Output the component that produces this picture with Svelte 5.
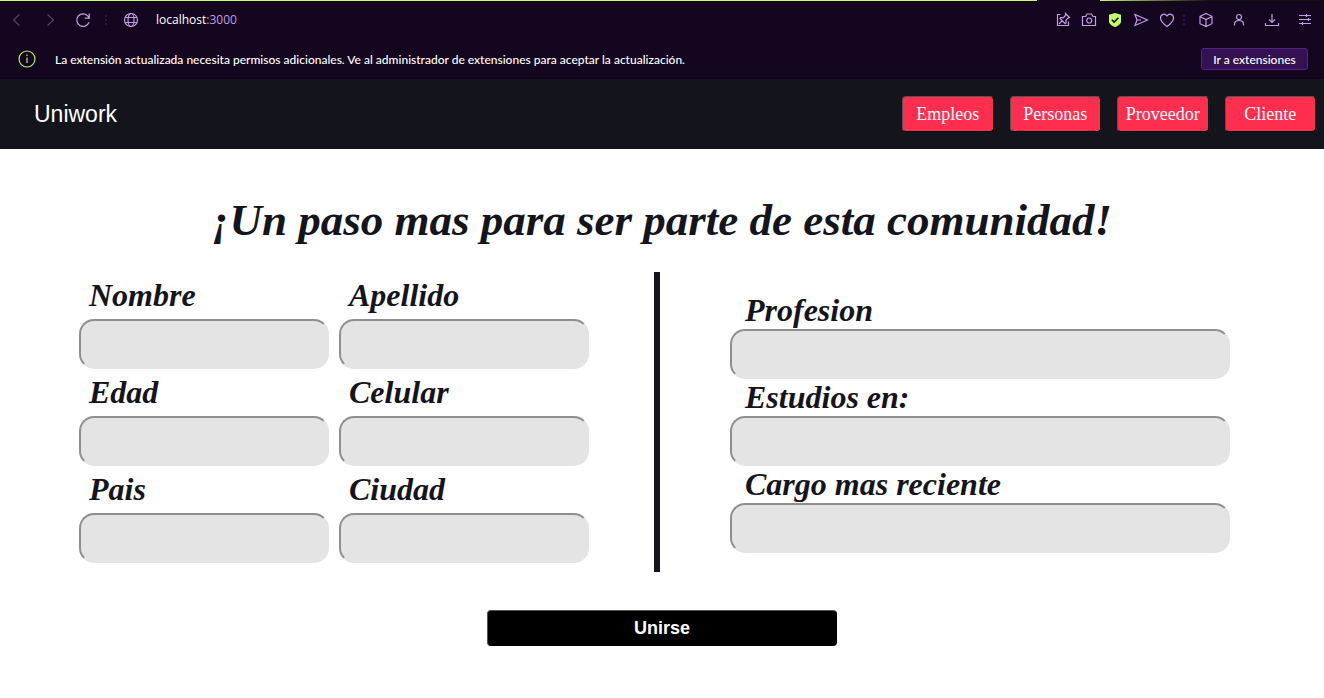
<script>
  const links = ['Empleos', 'Personas', 'Proveedor', 'Cliente'];
  const personal = [
    ['nombre', 'Nombre'],
    ['apellido', 'Apellido'],
    ['edad', 'Edad'],
    ['celular', 'Celular'],
    ['pais', 'Pais'],
    ['ciudad', 'Ciudad']
  ];
  const work = [
    ['profesion', 'Profesion'],
    ['estudios', 'Estudios en:'],
    ['cargo', 'Cargo mas reciente']
  ];
</script>

<div class="browser">
  <div class="loading"><span class="done"></span><span class="fade"></span></div>
  <div class="toolbar">
    <div class="group start">
      <button class="icon dim" aria-label="Atrás"><svg viewBox="0 0 16 16"><path d="M10.500 2.500 4.500 8l6 5.500" /></svg></button>
      <button class="icon dim" aria-label="Adelante"><svg viewBox="0 0 16 16"><path d="M5.500 2.500l6 5.500-6 5.500" /></svg></button>
      <button class="icon" aria-label="Recargar"><svg viewBox="0 0 16 16"><path d="M14 10.300A6.300 6.300 0 1 1 13 4.200L14.300 6M14.300 1.500v4.700H9.800" /></svg></button>
      <span class="dots"></span>
      <button class="icon" aria-label="Información del sitio"><svg viewBox="0 0 16 16"><circle cx="8" cy="8" r="6.500" /><ellipse cx="8" cy="8" rx="3" ry="6.500" /><path d="M2.300 5.500h11.400M2.300 10.500h11.400" /></svg></button>
      <span class="address">localhost<span class="port">:3000</span></span>
    </div>
    <div class="group tools">
      <button class="icon" aria-label="Fijar"><svg viewBox="0 0 16 16"><path d="M5.500 2.500h-3v11h11v-4M10.500 1.500l4 4-1.300.4-2.200 2.300.2 2.600-1 .8-5.200-5.200.9-.9 2.700.1 2-2.400zM7.300 8.700l-3.300 3.300" /></svg></button>
      <button class="icon" aria-label="Captura"><svg viewBox="0 0 16 16"><path d="M1.500 4.500h3l1.500-2.500h4.500l1.500 2.500h2.500v9h-13z" /><circle cx="8.200" cy="8.500" r="2.500" /></svg></button>
      <button class="icon" aria-label="Protección"><svg viewBox="0 0 16 16"><path class="shield" d="M8 1l6 1.800v6.400C14 12 11 14 8 15c-3-1-6-3-6-5.800V2.800z" /><path class="check" d="M4.800 7.700l2.300 2.300 4.300-4.300" /></svg></button>
      <button class="icon" aria-label="Enviar"><svg viewBox="0 0 16 16"><path d="M2 2.500l12.500 5.500L2 13.500l2-5.500zM4 8h4" /></svg></button>
      <button class="icon" aria-label="Favoritos"><svg viewBox="0 0 16 16"><path d="M8 14.500C5 12.300 1.500 9.500 1.500 6 1.500 2 6 .9 8 4c2-3.100 6.500-2 6.500 2C14.500 9.500 11 12.300 8 14.500z" /></svg></button>
    </div>
    <span class="dots"></span>
    <div class="group apps">
      <button class="icon" aria-label="Extensiones"><svg viewBox="0 0 16 16"><path d="M8 1.500l6 2.800v7.400l-6 2.800-6-2.800V4.300zM2 4.500l6 3 6-3M8 7.500v7" /></svg></button>
      <button class="icon" aria-label="Perfil"><svg viewBox="0 0 16 16"><circle cx="8" cy="5" r="2.500" /><path d="M3.500 13.500V12c0-2.500 2-3.500 4.500-3.500s4.500 1 4.500 3.500v1.500" /></svg></button>
      <button class="icon" aria-label="Descargas"><svg viewBox="0 0 16 16"><path d="M8 2v8.500M5 7.500l3 3 3-3M1.500 11v2.500h13V11" /></svg></button>
      <button class="icon" aria-label="Configuración"><svg viewBox="0 0 16 16"><path d="M2 3.500h12M2 7.500h12M2 11.500h12M9.500 2v3M11.500 6v3M5.500 10v3" /></svg></button>
    </div>
  </div>
  <div class="notice">
    <svg class="info" viewBox="0 0 18 18"><circle cx="9" cy="9" r="8" /><path d="M9 7.500v5.500M9 4.500v1.500" /></svg>
    <p>La extensión actualizada necesita permisos adicionales. Ve al administrador de extensiones para aceptar la actualización.</p>
    <button class="extensions">Ir a extensiones</button>
  </div>
</div>

<header>
  <a class="brand" href="#inicio">Uniwork</a>
  <nav>
    {#each links as link}
      <button>{link}</button>
    {/each}
  </nav>
</header>

<main>
  <h1>¡Un paso mas para ser parte de esta comunidad!</h1>
  <form>
    <div class="columns">
      <div class="personal">
        {#each personal as [id, label]}
          <div class="field"><label for={id}>{label}</label><input {id} type="text" /></div>
        {/each}
      </div>
      <div class="divider"></div>
      <div class="work">
        {#each work as [id, label]}
          <div class="field"><label for={id}>{label}</label><input {id} type="text" /></div>
        {/each}
      </div>
    </div>
    <button class="join" type="button">Unirse</button>
  </form>
</main>

<style>
  :global(body) { background: #fff; }
  * { box-sizing: border-box; }
  button { cursor: pointer; }

  .browser {
    background: #15061f;
    color: #fff;
    font-family: Lato, "Noto Sans", sans-serif;
    font-size: 12px;
    font-weight: 500;
  }
  .loading { display: flex; height: 1px; }
  .done { flex: 1037; background: #c0ff66; }
  .fade { flex: 287; background: linear-gradient(90deg, #15061f 22%, #c0ff66 22%, #111 60%); }
  .toolbar { display: flex; align-items: center; height: 38px; padding: 0 11px 0 9px; }
  .group { display: flex; align-items: center; }
  .start { gap: 17px; flex: 1; }
  .start .dots { margin: 0 -1px 0 -3px; }
  .tools { gap: 10px; }
  .apps { gap: 17px; }
  .toolbar > .dots { margin: 0 13px 0 8px; }
  .icon { width: 16px; height: 16px; padding: 0; border: 0; background: none; color: #c49be6; }
  .dim { color: #57416a; }
  svg { display: block; width: 100%; height: 100%; fill: none; stroke: currentColor; stroke-width: 1.2; }
  .icon .shield { fill: #c0ff66; stroke: none; }
  .icon .check { stroke: #15061f; stroke-width: 1.6; }
  .dots { width: 2px; height: 10px; background: repeating-linear-gradient(#2b1548 0 2px, transparent 2px 4px); }
  .address { font-family: "Open Sans", "Noto Sans", sans-serif; font-weight: 400; line-height: 16px; }
  .port { color: #c49be6; }

  .notice { display: flex; align-items: center; height: 40px; padding: 0 16px 0 18px; }
  .notice .info { width: 18px; height: 18px; margin-right: 19px; color: #b6f25f; }
  .notice p { flex: 1; margin: 0; }
  .extensions {
    width: 107px;
    height: 22px;
    padding: 0;
    border: 1px solid #56208a;
    border-radius: 3px;
    background: #341150;
    color: #fff;
    font: inherit;
  }

  header {
    display: flex;
    align-items: center;
    justify-content: space-between;
    height: 70px;
    padding: 0 8px 0 34px;
    background: #14141d;
  }
  .brand { color: #fff; font: 23px "Liberation Sans", Arial, sans-serif; text-decoration: none; }
  nav { display: grid; grid-template-columns: repeat(4, 1fr); gap: 16px; width: 414px; }
  nav button {
    height: 36px;
    padding: 0;
    border: 1px outset #000;
    border-radius: 4px;
    background: #ff2e4f;
    color: #fff;
    font: 18px "Liberation Serif", "Times New Roman", serif;
  }

  main { padding-top: 44px; font-family: "Liberation Serif", "Times New Roman", serif; color: #14141d; }
  h1 { margin: 0 0 24px; font-size: 45px; line-height: 55px; font-style: italic; text-align: center; }
  form { display: flex; flex-direction: column; align-items: center; gap: 38px; }
  .columns {
    display: grid;
    grid-template-columns: 1fr 6px 1fr;
    justify-items: center;
    width: 100%;
    min-height: 300px;
    padding: 0 24px 0 14px;
  }
  .divider { width: 6px; background: #14141d; }
  .personal { display: grid; grid-template-columns: 250px 250px; column-gap: 10px; align-content: start; }
  .work { align-self: center; width: 500px; }
  .field { display: flex; flex-direction: column; }
  label { padding-left: 10px; font-size: 32px; line-height: 47px; font-weight: bold; font-style: italic; }
  .work label { padding-left: 15px; line-height: 37px; }
  input {
    width: 100%;
    height: 50px;
    padding: 0 12px;
    border: 2px solid;
    border-color: #8f8f8f #e4e4e4 #e4e4e4 #8f8f8f;
    border-radius: 15px;
    background: #e4e4e4;
    font: 20px "Liberation Serif", serif;
  }
  .join {
    width: 350px;
    height: 36px;
    padding: 0;
    border: 1px outset #000;
    border-radius: 4px;
    background: #000;
    color: #fff;
    font: bold 18px "Liberation Sans", Arial, sans-serif;
  }
</style>
